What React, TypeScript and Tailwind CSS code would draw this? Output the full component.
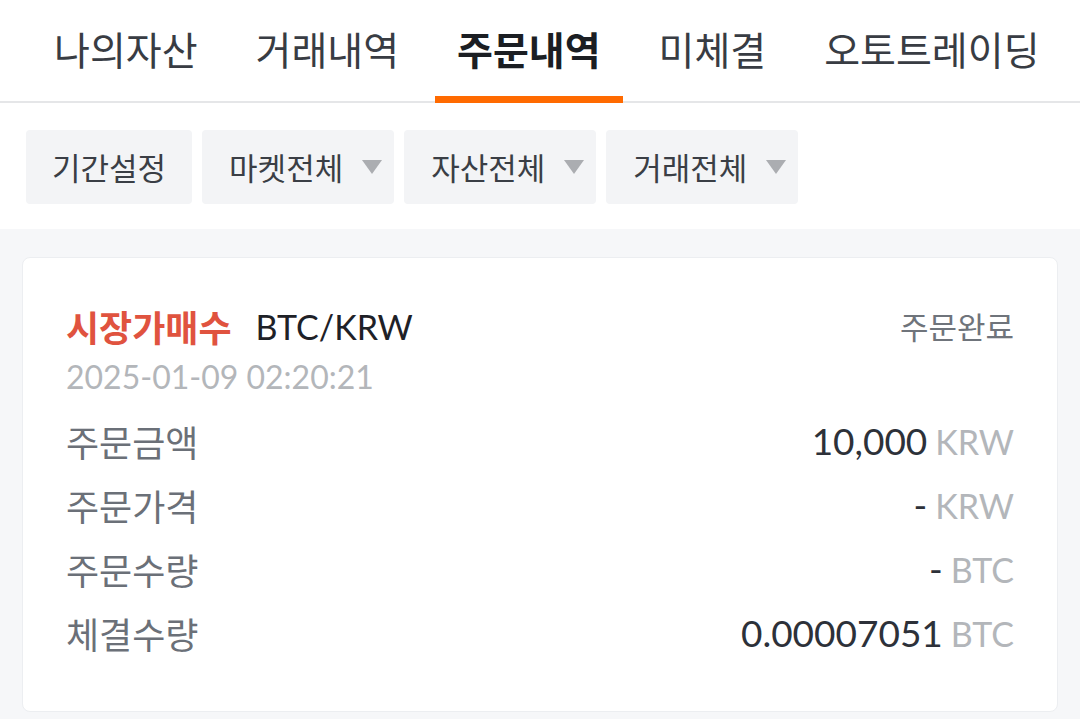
import React from "react";

const tabs = ["나의자산", "거래내역", "주문내역", "미체결", "오토트레이딩"];
const filters = [
  { label: "기간설정", arrow: false },
  { label: "마켓전체", arrow: true },
  { label: "자산전체", arrow: true },
  { label: "거래전체", arrow: true },
];
const rows = [
  { label: "주문금액", value: "10,000", unit: "KRW" },
  { label: "주문가격", value: "-", unit: "KRW" },
  { label: "주문수량", value: "-", unit: "BTC" },
  { label: "체결수량", value: "0.00007051", unit: "BTC" },
];

const kr = { fontFamily: '"Noto Sans CJK KR", sans-serif' };

function Caret() {
  return (
    <svg width="20" height="14" viewBox="0 0 20 14" className="shrink-0">
      <path d="M0 0 L20 0 L10 14 Z" fill="#abadb1" />
    </svg>
  );
}

export default function App() {
  return (
    <div
      className="min-h-[719px] w-[1080px] bg-[#f6f7f9]"
      style={{ fontFamily: 'Lato, "Noto Sans CJK KR", sans-serif' }}
    >
      <div className="flex h-[103px] gap-[14px] border-b-2 border-[#e5e6e8] bg-white pl-[32px]">
        {tabs.map((t) => {
          const active = t === "주문내역";
          return (
            <div
              key={t}
              className={`-mb-[2px] flex items-center whitespace-nowrap border-b-[7px] px-[22px] text-[39px] ${
                active
                  ? "border-[#ff6a00] font-bold text-[#1b1e23]"
                  : "border-transparent text-[#383c43]"
              }`}
              style={kr}
            >
              {t}
            </div>
          );
        })}
      </div>

      <div className="flex gap-[10px] bg-white px-[26px] pt-[27px] pb-[25px]">
        {filters.map((f) => (
          <div
            key={f.label}
            className={`flex h-[74px] items-center gap-[19px] rounded-[4px] bg-[#f3f4f6] text-[31px] text-[#3a3e45] ${
              f.arrow ? "pl-[27px] pr-[12px]" : "px-[26px]"
            }`}
            style={kr}
          >
            <span>{f.label}</span>
            {f.arrow && <Caret />}
          </div>
        ))}
      </div>

      <div className="px-[22px] pt-[28px]">
        <div className="rounded-[8px] border border-[#eceef1] bg-white px-[43px] pt-[44px] pb-[46px]">
          <div className="flex h-[48px] items-center justify-between">
            <div className="flex items-center gap-[24px]">
              <span className="text-[36px] font-bold text-[#e0533f]" style={kr}>
                시장가매수
              </span>
              <span className="text-[34px] text-[#1e2127]">BTC/KRW</span>
            </div>
            <span className="text-[31px] text-[#6f747b]" style={kr}>
              주문완료
            </span>
          </div>
          <div className="mt-[9px] flex h-[36px] items-center text-[32px] text-[#b3b6ba]">
            2025-01-09 02:20:21
          </div>
          <div className="mt-[14px]">
            {rows.map((r) => (
              <div key={r.label} className="flex h-[64px] items-center justify-between">
                <span className="text-[36px] text-[#6b7078]" style={kr}>
                  {r.label}
                </span>
                <span className="flex items-baseline gap-[8px]">
                  <span className="text-[37px] text-[#2d3139]">{r.value}</span>
                  <span className="text-[34px] text-[#b3b6ba]">{r.unit}</span>
                </span>
              </div>
            ))}
          </div>
        </div>
      </div>
    </div>
  );
}
